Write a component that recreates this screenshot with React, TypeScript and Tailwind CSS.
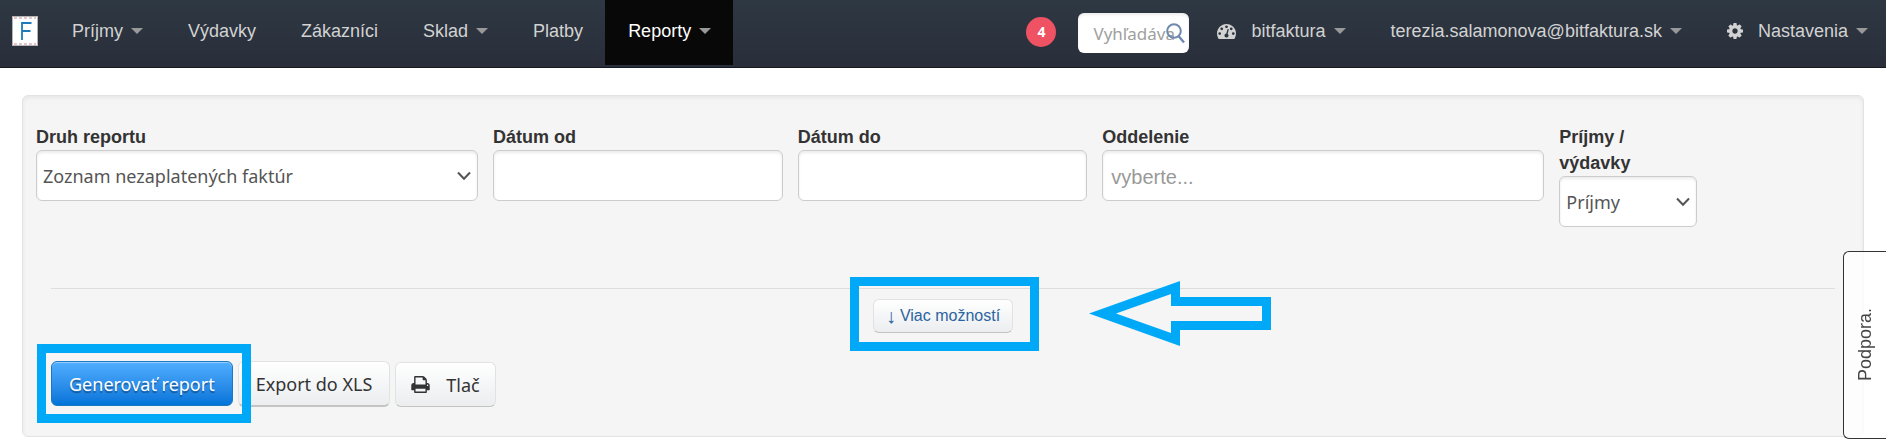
import type { ReactNode } from "react";

type NavEntry = {
  label: string;
  menu?: boolean; // shows the small caret
  active?: boolean;
};

const mainNav: NavEntry[] = [
  { label: "Príjmy", menu: true },
  { label: "Výdavky" },
  { label: "Zákazníci" },
  { label: "Sklad", menu: true },
  { label: "Platby" },
  { label: "Reporty", menu: true, active: true },
];

const control =
  "h-[51px] w-full rounded-md border border-[#ccc] bg-white text-[#555] shadow-[inset_0_2px_3px_rgba(0,0,0,0.08)] outline-none";

const humanist = "font-['Noto_Sans',sans-serif]";

function DashboardIcon() {
  return (
    <svg width="19" height="15" viewBox="0 256 1792 1408" fill="currentColor" aria-hidden="true">
      <path d="M384 1152q0-53-37.5-90.5t-90.5-37.5-90.5 37.5-37.5 90.5 37.5 90.5 90.5 37.5 90.5-37.5 37.5-90.5zM576 704q0-53-37.5-90.5t-90.5-37.5-90.5 37.5-37.5 90.5 37.5 90.5 90.5 37.5 90.5-37.5 37.5-90.5zM1004 1185l101-382q6-26-7.5-48.5t-38.5-29.5-48 6.5-30 39.5l-101 382q-60 5-107 43.5t-63 98.5q-20 77 20 146t117 89 146-20 89-117q16-60-6-117t-72-91zM1664 1152q0-53-37.5-90.5t-90.5-37.5-90.5 37.5-37.5 90.5 37.5 90.5 90.5 37.5 90.5-37.5 37.5-90.5zM1024 512q0-53-37.5-90.5t-90.5-37.5-90.5 37.5-37.5 90.5 37.5 90.5 90.5 37.5 90.5-37.5 37.5-90.5zM1472 704q0-53-37.5-90.5t-90.5-37.5-90.5 37.5-37.5 90.5 37.5 90.5 90.5 37.5 90.5-37.5 37.5-90.5zM1792 1152q0 261-141 483-19 29-54 29h-1402q-35 0-54-29-141-221-141-483 0-182 71-348t191-286 286-191 348-71 348 71 286 191 191 286 71 348z" />
    </svg>
  );
}

function CogIcon() {
  return (
    <svg width="16" height="16" viewBox="0 128 1536 1536" fill="currentColor" aria-hidden="true">
      <path d="M1024 896q0-106-75-181t-181-75-181 75-75 181 75 181 181 75 181-75 75-181zM1536 787v222q0 12-8 23t-20 13l-185 28q-19 54-39 91 35 50 107 138 10 12 10 25t-9 23q-27 37-99 108t-94 71q-12 0-26-9l-138-108q-44 23-91 38-16 136-29 186-7 28-36 28h-222q-14 0-24.5-8.5t-11.5-21.5l-28-184q-49-16-90-37l-141 107q-10 9-25 9-14 0-25-11-126-114-165-168-7-10-7-23 0-12 8-23 15-21 51-66.5t54-70.5q-27-50-41-99l-183-27q-13-2-21-12.5t-8-23.5v-222q0-12 8-23t19-13l186-28q14-46 39-92-40-57-107-138-10-12-10-24 0-10 9-23 26-36 98.5-107.5t94.5-71.5q13 0 26 10l138 107q44-23 91-38 16-136 29-186 7-28 36-28h222q14 0 24.5 8.5t11.5 21.5l28 184q49 16 90 37l142-107q9-9 24-9 13 0 25 10 129 119 165 170 7 8 7 22 0 12-8 23-15 21-51 66.5t-54 70.5q26 50 41 98l183 28q13 2 21 12.5t8 23.5z" />
    </svg>
  );
}

function PrintIcon() {
  return (
    <svg width="19" height="17" viewBox="0 128 1664 1536" fill="currentColor" aria-hidden="true">
      <path d="M384 1536h896v-256h-896v256zM384 896h896v-384h-160q-40 0-68-28t-28-68v-160h-640v640zM1536 960q0-26-19-45t-45-19-45 19-19 45 19 45 45 19 45-19 19-45zM1664 960v416q0 13-9.5 22.5t-22.5 9.5h-224v160q0 40-28 68t-68 28h-960q-40 0-68-28t-28-68v-160h-224q-13 0-22.5-9.5t-9.5-22.5v-416q0-79 56.5-135.5t135.5-56.5h64v-544q0-40 28-68t68-28h672q40 0 88 20t76 48l152 152q28 28 48 76t20 88v256h64q79 0 135.5 56.5t56.5 135.5z" />
    </svg>
  );
}

function Logo() {
  return (
    <svg width="26" height="30" viewBox="0 0 26 30" aria-hidden="true">
      <rect x="0.5" y="0.5" width="25" height="29" fill="#fff" stroke="#b5b5b5" />
      <path d="M2 2H24M2 28H24" stroke="#f3a9a4" strokeWidth="1.6" strokeDasharray="2 3" />
      <path d="M4 2H24M4 28H24" stroke="#a9cbe6" strokeWidth="1.6" strokeDasharray="1 4" />
      <path d="M10 24V7H19.5M10 15H18.5" fill="none" stroke="#1f7ab8" strokeWidth="1.8" />
    </svg>
  );
}

function Caret() {
  return <span className="ml-2 block h-0 w-0 border-x-6 border-t-6 border-x-transparent border-t-[#999]" />;
}

function NavLink({ label, menu, active, icon }: NavEntry & { icon?: ReactNode }) {
  return (
    <a
      href="#"
      className={`flex h-[65px] shrink-0 items-center pr-[22px] pb-[3px] pl-[23px] ${
        active ? "bg-[#080808] text-white" : "text-[#d2d2d2]"
      }`}
    >
      {icon && <span className="mr-[15px]">{icon}</span>}
      {label}
      {menu && <Caret />}
    </a>
  );
}

function Field({
  id,
  label,
  span,
  children,
}: {
  id: string;
  label: string;
  span: string;
  children: ReactNode;
}) {
  return (
    <div className={span}>
      <label htmlFor={id} className="block leading-[26px] font-bold text-[#333]">
        {label}
      </label>
      {children}
    </div>
  );
}

function Select({ id, value }: { id: string; value: string }) {
  return (
    <div className="relative">
      <select id={id} className={`${control} ${humanist} appearance-none pt-px pr-8 pl-[6px] text-lg`}>
        <option>{value}</option>
      </select>
      <svg
        className="pointer-events-none absolute top-[21px] right-[7px]"
        width="14"
        height="10"
        viewBox="0 0 14 10"
        fill="none"
        stroke="#555"
        strokeWidth="2"
      >
        <path d="M1 1.5L7 7.8L13 1.5" />
      </svg>
    </div>
  );
}

// blue frame laid over a highlighted button
function Frame({ className }: { className: string }) {
  return <span className={`pointer-events-none absolute z-10 border-[9px] border-[#00a9f7] ${className}`} />;
}

const lightButton =
  "rounded-md border border-[#e2e2e2] border-b-[#c4c4c4] bg-linear-to-b from-white to-[#ebedef]";

export default function App() {
  return (
    <div className="min-h-screen overflow-x-hidden bg-white font-['Liberation_Sans',Arial,sans-serif] text-lg">
      <header className="flex h-[68px] items-start border-b border-[#14181f] bg-linear-to-b from-[#2e3842] to-[#292e3a]">
        <a href="#" aria-label="Fakturácia" className="mt-4 mr-[11px] ml-3 shrink-0">
          <Logo />
        </a>
        <nav className="flex">
          {mainNav.map((entry) => (
            <NavLink key={entry.label} {...entry} />
          ))}
        </nav>

        <div className="-mr-1 ml-auto flex">
          <span
            className={`mt-[17px] flex size-[30px] items-center justify-center rounded-full bg-[#ee5263] text-sm font-bold text-white ${humanist}`}
          >
            4
          </span>
          <div className="relative mt-[13px] mr-[5px] ml-[22px] h-10 w-[111px]">
            <input
              type="text"
              aria-label="Vyhľadávanie"
              placeholder="Vyhľadávanie"
              className={`h-full w-full rounded-md bg-white px-[15px] text-[17px] shadow-[inset_0_2px_3px_rgba(0,0,0,0.08)] placeholder:text-[#a0a0a0] ${humanist}`}
            />
            <svg
              className="pointer-events-none absolute top-[10px] right-1"
              width="19"
              height="21"
              viewBox="0 0 19 21"
              fill="none"
              stroke="#6f89ad"
              strokeWidth="2"
            >
              <circle cx="8" cy="8" r="6.8" />
              <path d="M12.5 13L18 19.5" strokeWidth="2.4" />
            </svg>
          </div>
          <NavLink label="bitfaktura" menu icon={<DashboardIcon />} />
          <NavLink label="terezia.salamonova@bitfaktura.sk" menu />
          <NavLink label="Nastavenia" menu icon={<CogIcon />} />
        </div>
      </header>

      <main className="mx-[22px] mt-[27px] rounded-md border border-[#e3e3e3] bg-[#f5f5f5] px-[13px] pt-7 pb-[29px] shadow-[inset_0_2px_4px_rgba(0,0,0,0.06)]">
        <form onSubmit={(e) => e.preventDefault()}>
          <div className="grid grid-cols-12 gap-[15px] pr-px">
            <Field id="kind" label="Druh reportu" span="col-span-3">
              <Select id="kind" value="Zoznam nezaplatených faktúr" />
            </Field>
            <Field id="date-from" label="Dátum od" span="col-span-2">
              <input id="date-from" type="text" className={`${control} px-2`} />
            </Field>
            <Field id="date-to" label="Dátum do" span="col-span-2">
              <input id="date-to" type="text" className={`${control} px-2`} />
            </Field>
            <Field id="department" label="Oddelenie" span="col-span-3">
              <input
                id="department"
                type="text"
                placeholder="vyberte..."
                className={`${control} px-2 pt-1 text-xl placeholder:text-[#999]`}
              />
            </Field>
            <Field id="income" label="Príjmy / výdavky" span="col-span-1">
              <Select id="income" value="Príjmy" />
            </Field>
          </div>

          <div className="relative mx-[15px] mt-[61px] flex justify-center border-t border-[#ddd] pt-[10px]">
            <div className="relative">
              <Frame className="-top-[22px] -right-[26px] -bottom-[18px] -left-[23px]" />
              <button
                type="button"
                className={`${lightButton} flex h-[34px] items-center gap-1 px-3 text-base text-[#2a64a0]`}
              >
                <span className="text-xl leading-none">↓</span>
                Viac možností
              </button>
              <svg
                className="pointer-events-none absolute -top-[18px] left-[216px]"
                width="183"
                height="66"
                viewBox="0 0 183 66"
                fill="#00a9f7"
                fillRule="evenodd"
              >
                <path d="M0 32.5L91 0V16H182V49H91V65ZM27 32.5L82 52V40H173V25H82V13Z" />
              </svg>
            </div>
          </div>

          <div className={`mt-7 ml-[15px] flex items-start gap-[5px] ${humanist}`}>
            <div className="relative">
              <Frame className="-top-[17px] -right-[18px] -bottom-[17px] -left-[14px]" />
              <button
                type="submit"
                className="h-[45px] rounded-md border border-[#1c78c0] bg-linear-to-b from-[#4faeff] to-[#0074d9] px-[17px] pt-px text-white shadow-[inset_0_1px_0_rgba(255,255,255,0.4)] text-shadow-[0_2px_1px_rgba(0,0,0,0.35)]"
              >
                Generovať report
              </button>
            </div>
            <button type="button" className={`${lightButton} h-[46px] border-b-2 px-[17px] pt-px text-[#333]`}>
              Export do XLS
            </button>
            <button type="button" className={`${lightButton} mt-px flex h-[45px] items-center gap-4 px-[15px] text-[#333]`}>
              <PrintIcon />
              Tlač
            </button>
          </div>
        </form>
      </main>

      <button
        type="button"
        className="fixed top-[251px] right-0 flex h-[188px] w-[43px] items-center justify-center rounded-l-md border border-r-0 border-[#333] bg-white/80 text-[#444]"
      >
        <span className="rotate-180 [writing-mode:vertical-rl]">Podpora.</span>
      </button>
    </div>
  );
}
